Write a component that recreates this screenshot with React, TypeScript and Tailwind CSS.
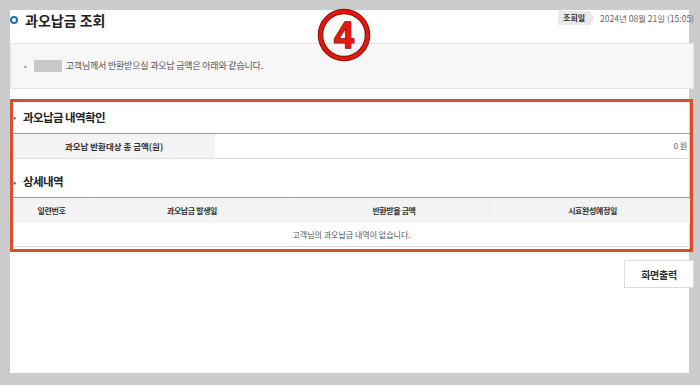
import React from "react";

const font = "font-['Noto_Sans_CJK_KR','Noto_Sans',sans-serif]";

function CircledFour() {
  return (
    <svg
      className="absolute left-[317px] top-[8px]"
      width="54"
      height="54"
      viewBox="0 0 54 54"
    >
      <circle cx="27" cy="27" r="23.5" fill="none" stroke="#8e0c07" strokeWidth="5.5" />
      <circle cx="27" cy="27" r="23.5" fill="none" stroke="#e3190f" strokeWidth="3.5" />
      <text
        x="27"
        y="40"
        textAnchor="middle"
        fontFamily="'Liberation Sans', Arial, sans-serif"
        fontWeight="bold"
        fontSize="36"
        fill="#e8190f"
        stroke="#8e0c07"
        strokeWidth="1.4"
        paintOrder="stroke"
      >
        4
      </text>
    </svg>
  );
}

export default function App() {
  const cols = [
    { label: "일련번호", w: "w-[77px]" },
    { label: "과오납금 발생일", w: "w-[203px]" },
    { label: "반환받을 금액", w: "w-[201px]" },
    { label: "시효완성예정일", w: "flex-1" },
  ];
  return (
    <div className={`relative w-[700px] h-[385px] bg-[#cccccc] overflow-hidden pt-[10px] pl-[10px] ${font}`}>
      <div className="w-[679px] h-[363px] bg-white">
        <div className="w-[684px] flex flex-col">
          {/* Title row */}
          <div className="h-[33px] flex items-start justify-between">
            <div className="flex items-center h-[20px]">
              <div className="w-[8px] h-[8px] rounded-full border-2 border-[#1f6ec1]" />
              <span className="ml-[7px] text-[14px] leading-[20px] font-bold text-[#222]">과오납금 조회</span>
            </div>
            <div className="flex items-center h-[14px] mt-[1px]">
              <div className="h-[14px] w-[32px] bg-[#e9e9e9] flex items-center justify-center text-[8px] font-bold text-[#333]">
                조회일
              </div>
              <div className="w-0 h-0 border-l-[4px] border-l-[#e9e9e9] border-y-[7px] border-y-transparent" />
              <span className="ml-[6px] text-[8.5px] text-[#666] whitespace-nowrap">2024년 08월 21일 (15:05)</span>
            </div>
          </div>

          {/* Info box */}
          <div className="h-[46px] bg-[#f7f7f7] border border-[#e6e6e6] flex items-center pl-[13px]">
            <span className="text-[8px] text-[#888]">•</span>
            <div className="ml-[7px] w-[28px] h-[12px] bg-[#c8c8c8]" />
            <span className="ml-[4px] text-[9px] tracking-[-0.2px] text-[#555]">고객님께서 반환받으실 과오납 금액은 아래와 같습니다.</span>
          </div>

          {/* Red frame */}
          <div className="mt-[10px] w-[683px] h-[153px] border-[3px] border-[#e14a2c] flex flex-col">
            <div className="h-[31px] flex items-center">
              <span className="text-[9px] text-[#3b5bb5] leading-none">•</span>
              <span className="ml-[7px] text-[11.5px] font-bold text-[#222] tracking-[-0.6px] whitespace-pre">과오납금 내역확인</span>
            </div>
            <div className="border-t border-[#8e9bd8]">
              <div className="h-[25px] flex border-b border-[#dedede]">
                <div className="w-[202px] bg-[#f3f3f3] flex items-center justify-center text-[8.5px] font-bold text-[#333]">
                  과오납 반환대상 총 금액(원)
                </div>
                <div className="flex-1 flex items-center justify-end pr-[3px] text-[8px] text-[#555]">0 원</div>
              </div>
            </div>
            <div className="h-[38px] pt-[8px] flex items-center">
              <span className="text-[9px] text-[#3b5bb5] leading-none">•</span>
              <span className="ml-[7px] text-[11.5px] font-bold text-[#222] tracking-[-0.6px]">상세내역</span>
            </div>
            <div className="border-t border-[#8e9bd8]">
              <div className="h-[25px] flex bg-[#f3f3f3]">
                {cols.map((c, i) => (
                  <div
                    key={c.label}
                    className={`${c.w} flex items-center justify-center text-[8px] font-bold text-[#333] tracking-[-0.4px] ${i > 0 ? "border-l border-[#fbfbfb]" : ""}`}
                  >
                    {c.label}
                  </div>
                ))}
              </div>
              <div className="h-[24px] flex items-center justify-center border-b border-[#dedede] text-[8px] text-[#555]">
                고객님의 과오납금 내역이 없습니다.
              </div>
            </div>
          </div>

          {/* Button */}
          <div className="mt-[8px] self-end w-[70px] h-[28px] border border-[#dcdcdc] bg-white flex items-center justify-center text-[10px] font-bold text-[#333] tracking-[-0.3px]">
            화면출력
          </div>
        </div>
      </div>
      <CircledFour />
    </div>
  );
}
